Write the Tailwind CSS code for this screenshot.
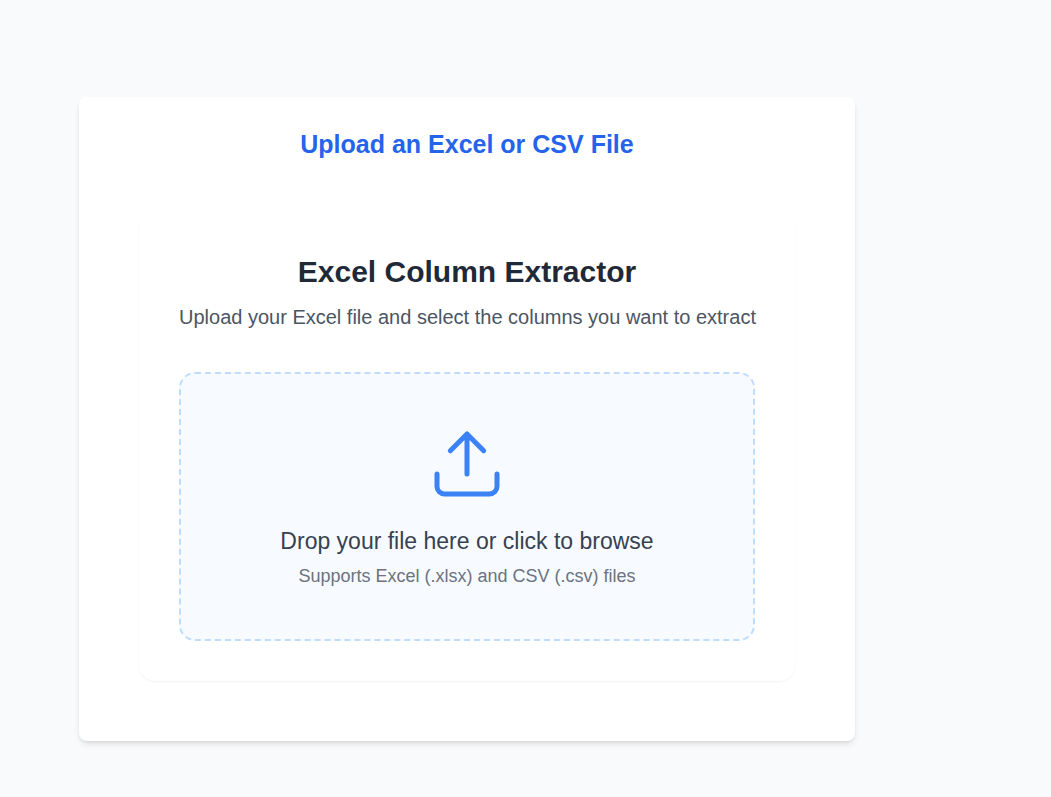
<!DOCTYPE html>
<html lang="en">
<head>
  <meta charset="UTF-8" />
  <title>Excel Column Extractor</title>
  <meta name="viewport" content="width=device-width, initial-scale=1.0" />
  <script src="https://cdn.jsdelivr.net/npm/@tailwindcss/browser@4"></script>
</head>
<body class="bg-[#f9fafb] min-h-screen font-['Liberation_Sans',Arial,sans-serif]">
  <main class="pt-[97px] pb-14 pl-[79px] pr-[196px]">
    <section class="bg-white rounded-lg shadow-md px-[60px] pt-[30px] pb-[60px]">
      <h1 class="text-[25px] leading-[35px] font-bold text-[#2563eb] text-center">Upload an Excel or CSV File</h1>

      <div class="bg-white rounded-2xl shadow-xs mt-[50px] p-10">
        <div class="text-center">
          <h2 class="text-[30px] leading-[40px] font-bold text-[#1f2937]">Excel Column Extractor</h2>
          <p class="mt-[10px] text-[20px] leading-[30px] text-[#4b5563] lg:whitespace-nowrap">Upload your Excel file and select the columns you want to extract</p>
        </div>

        <label for="fileInput" class="mt-10 flex flex-col items-center rounded-2xl border-2 border-dashed border-[#bfdbfe] bg-[#f7fbff] px-10 pt-[50px] pb-12 text-center cursor-pointer">
          <svg class="size-20 text-[#3b82f6]" viewBox="0 0 24 24" fill="none" stroke="currentColor" stroke-width="1.5" stroke-linecap="round" stroke-linejoin="round" aria-hidden="true">
            <path d="M3 15v3.75A2.25 2.25 0 0 0 5.25 21h13.5A2.25 2.25 0 0 0 21 18.75V15" />
            <path d="M7 8l5-5 5 5M12 3v12" />
          </svg>
          <span class="mt-5 text-[23px] leading-[35px] text-[#374151]">Drop your file here or click to browse</span>
          <span class="mt-[2px] text-[18px] leading-[30px] text-[#6b7280]">Supports Excel (.xlsx) and CSV (.csv) files</span>
          <input type="file" id="fileInput" accept=".xlsx,.csv" class="sr-only" />
        </label>
      </div>
    </section>
  </main>
</body>
</html>
